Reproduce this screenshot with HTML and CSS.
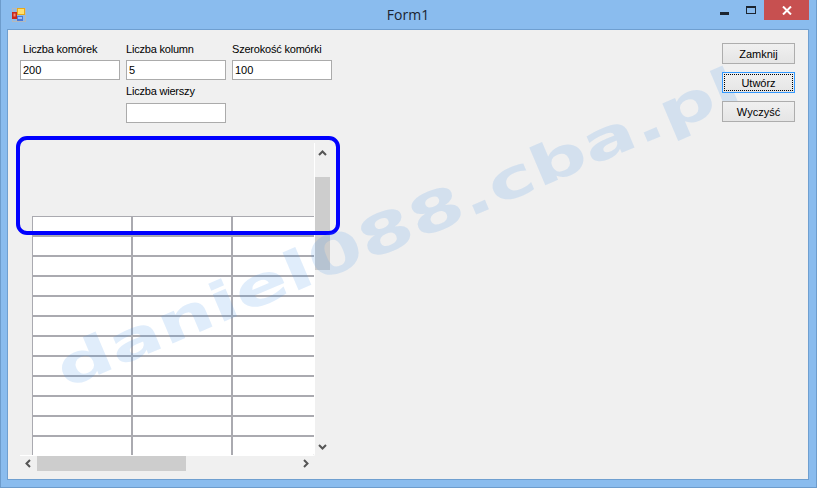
FILE: index.html
```html
<!DOCTYPE html>
<html lang="pl">
<head>
<meta charset="utf-8">
<title>Form1</title>
<link rel="stylesheet" href="styles.css">
</head>
<body>
<div class="window">
  <header class="titlebar">
    <svg class="app-icon" width="16" height="16" viewBox="0 0 16 16">
      <path d="M1 1.5h14M1 14.5h14M1.500 1v14M14.500 1v14M5.500 1v14M1 5.500h14" stroke="#b4b8bc" fill="none"/>
      <rect x="1" y="5" width="5" height="7" fill="#c8281c"/><rect x="2.500" y="6.500" width="2" height="3" fill="#f0907c"/>
      <rect x="6" y="1" width="8" height="7" fill="#e8a818"/><rect x="7" y="2" width="6" height="5" fill="#fde070"/>
      <rect x="6" y="9" width="6" height="5" fill="#4a78d8"/><rect x="7" y="10" width="4" height="2" fill="#9cc0f4"/>
    </svg>
    <span class="title">Form1</span>
    <div class="caption-buttons">
      <svg class="caption-min" width="9" height="3" viewBox="0 0 9 3"><rect width="9" height="3" fill="#1c2530"/></svg>
      <svg class="caption-max" width="10" height="8" viewBox="0 0 10 8"><rect x=".5" y=".5" width="9" height="7" fill="none" stroke="#1c2530"/><rect x="0" y="0" width="10" height="2" fill="#1c2530"/></svg>
      <div class="caption-close">
        <svg width="10" height="9" viewBox="0 0 10 9"><path d="M1 .5l8 8M9 .5l-8 8" stroke="#fff" stroke-width="2" fill="none"/></svg>
      </div>
    </div>
  </header>
  <main class="client">
    <div class="watermark">daniel088.cba.pl</div>
    <div class="top">
      <div class="fields">
        <label class="field field-first"><span>Liczba komórek</span><input class="text" value="200"></label>
        <label class="field"><span>Liczba kolumn</span><input class="text" value="5"></label>
        <label class="field"><span>Szerokość komórki</span><input class="text" value="100"></label>
        <label class="field field-second"><span>Liczba wierszy</span><input class="text" value=""></label>
      </div>
      <div class="actions">
        <button class="btn">Zamknij</button>
        <button class="btn btn-focus"><span>Utwórz</span></button>
        <button class="btn">Wyczyść</button>
      </div>
    </div>
    <section class="pane">
      <div class="pane-main">
        <div class="viewport">
          <div class="cells">
            <i></i><i></i><i></i><i></i><i></i><i></i><i></i><i></i><i></i><i></i><i></i><i></i><i></i>
            <i></i><i></i><i></i><i></i><i></i><i></i><i></i><i></i><i></i><i></i><i></i><i></i><i></i>
            <i></i><i></i><i></i><i></i><i></i><i></i><i></i><i></i><i></i><i></i><i></i><i></i><i></i>
          </div>
        </div>
        <div class="vscroll">
          <svg class="arrow" width="9" height="6" viewBox="0 0 9 6"><path d="M1 5l3.500-3.500L8 5" stroke="#555" stroke-width="2" fill="none"/></svg>
          <div class="vthumb"></div>
          <svg class="arrow" width="9" height="6" viewBox="0 0 9 6"><path d="M1 1l3.500 3.500L8 1" stroke="#555" stroke-width="2" fill="none"/></svg>
        </div>
      </div>
      <div class="hscroll">
        <svg class="arrow" width="6" height="9" viewBox="0 0 6 9"><path d="M5 1L1.500 4.500 5 8" stroke="#555" stroke-width="2" fill="none"/></svg>
        <div class="htrack"><div class="hthumb"></div></div>
        <svg class="arrow" width="6" height="9" viewBox="0 0 6 9"><path d="M1 1l3.500 3.500L1 8" stroke="#555" stroke-width="2" fill="none"/></svg>
      </div>
    </section>
    <div class="highlight"></div>
  </main>
</div>
</body>
</html>
```
FILE: styles.css
```css
* { box-sizing: border-box; }
html, body { margin: 0; height: 100%; }
body { font-family: "Liberation Sans", Arial, sans-serif; font-size: 11px; color: #000; overflow: hidden; }

.window {
  width: 817px; height: 488px;
  background: #8abcee;
  display: flex; flex-direction: column;
  padding: 0 7px 7px 6px;
  border-left: 1px solid #6d9ccc;
  border-right: 1px solid #6d9ccc;
  border-bottom: 1px solid #6d9ccc;
  margin: 0;
}

.titlebar { height: 29px; display: flex; flex: none; position: relative; align-items: flex-start; }
.app-icon { margin: 7px 0 0 4px; flex: none; }
.title {
  position: absolute; left: 0; right: 0; top: 5px; text-align: center;
  font-family: "Open Sans", sans-serif; font-size: 14px; line-height: 20px; color: #1a2430;
}
.caption-buttons { margin-left: auto; display: flex; align-items: flex-start; }
.caption-min { margin-top: 12px; }
.caption-max { margin: 6px 0 0 17px; }
.caption-close {
  margin-left: 8px; width: 45px; height: 20px; background: #c75050;
  display: flex; align-items: center; justify-content: center;
}

.client {
  flex: 1; position: relative; overflow: hidden;
  background: #f0f0f0; border: 1px solid #6f9fd0;
  padding: 12px 13px 0 12px;
}

.top { display: flex; justify-content: space-between; height: 98px; }
.fields { display: grid; grid-template-columns: 100px 100px 100px; column-gap: 6px; grid-auto-rows: 43px; }
.field { display: flex; flex-direction: column; gap: 5px; }
.field span { line-height: 13px; height: 13px; margin: 1px 0 -1px; white-space: nowrap; letter-spacing: -.2px; }
.field-first span { padding-left: 3px; }
.field-second span { margin: 0; }
.field-second { grid-column: 2; }
.text {
  width: 100px; height: 20px; border: 1px solid #ababab; background: #fff;
  font: 11px "Liberation Sans", Arial, sans-serif; padding: 0 2px; margin: 0; outline: none; color: #000;
}

.actions { display: flex; flex-direction: column; gap: 8px; padding-top: 1px; position: relative; z-index: 3; }
.btn {
  width: 73px; height: 21px; padding: 0; margin: 0;
  border: 1px solid #adadad; background: linear-gradient(#f0f0f0, #e5e5e5);
  font: 11px "Liberation Sans", Arial, sans-serif; color: #000;
  display: flex; align-items: center; justify-content: center;
}
.btn-focus { border: 1px solid #3399ff; padding: 1px; }
.btn-focus span {
  flex: 1; align-self: stretch; border: 1px dotted #000;
  display: flex; align-items: center; justify-content: center;
}

.pane { width: 310px; display: flex; flex-direction: column; }
.pane-main { display: flex; height: 316px; }
.viewport {
  width: 295px; height: 313px; margin-top: 3px; overflow: hidden;
  border-right: 1px solid #fff; border-bottom: 1px solid #fff; border-bottom-right-radius: 2px;
  padding: 73px 0 0 12px;
}
.cells {
  display: grid; grid-template-columns: 98px 98px 100px; grid-auto-rows: 18px;
  gap: 2px; padding: 1px 0 0 1px; background: #aaaab0; width: 302px;
}
.cells i { background: #fff; display: block; }

.vscroll { width: 15px; display: flex; flex-direction: column; align-items: center; padding-top: 10px; }
.vthumb { width: 15px; height: 93px; background: #cdcdcd; margin-top: 21px; margin-bottom: 174px; }
.hscroll { height: 15px; display: flex; align-items: center; padding: 0 21px 0 5px; }
.htrack { flex: 1; margin: 0 0 0 6px; padding-right: 6px; height: 15px; }
.hthumb { width: 149px; height: 15px; background: #cdcdcd; }
.arrow { flex: none; display: block; }

.highlight {
  position: absolute; left: 8px; top: 106px; width: 324px; height: 99px;
  border: 4px solid #0000ff; border-radius: 11px;
}
.watermark {
  position: absolute; left: 62px; top: 311px;
  font: bold 54px "DejaVu Sans", sans-serif; line-height: 58px; white-space: nowrap;
  color: rgba(70, 150, 230, .17);
  transform-origin: 0 100%;
  transform: rotate(-23deg) scaleX(1.46);
  z-index: 2; pointer-events: none;
}
```
